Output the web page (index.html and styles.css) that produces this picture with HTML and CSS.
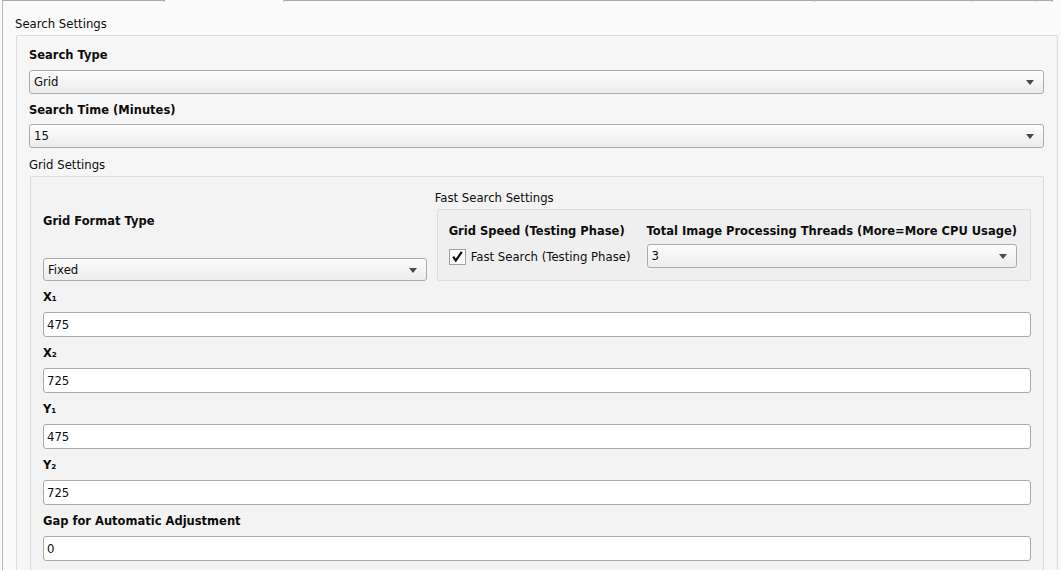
FILE: index.html
```html
<!DOCTYPE html>
<html>
<head>
<meta charset="utf-8">
<link rel="stylesheet" href="styles.css">
</head>
<body>
<div class="tabs">
  <div class="tab t1"></div>
  <div class="tab tactive"></div>
  <div class="tab t3"></div>
  <div class="tab t4"></div>
  <div class="tab t5"></div>
  <div class="tab t6"></div>
</div>
<div class="page">
  <div class="page-title">Search Settings</div>
  <div class="group outer">
    <div class="lbl lbl-first">Search Type</div>
    <div class="combo combo-top"><span>Grid</span><i class="arrow"></i></div>
    <div class="lbl">Search Time (Minutes)</div>
    <div class="combo combo-top"><span>15</span><i class="arrow"></i></div>
    <div class="caption">Grid Settings</div>
    <div class="group inner">
      <div class="grid-row">
        <div class="col-format">
          <div class="lbl-format">Grid Format Type</div>
          <div class="combo combo-fixed"><span>Fixed</span><i class="arrow"></i></div>
        </div>
        <div class="col-fast">
          <div class="fast-caption">Fast Search Settings</div>
          <div class="group fast">
            <div class="fast-col speed">
              <div class="lbl-fast">Grid Speed (Testing Phase)</div>
              <label class="check-row">
                <span class="checkbox"><svg width="13" height="13" viewBox="0 0 13 13"><path d="M2.2 6.6 L4.8 10.6 L10.8 1.8" fill="none" stroke="#111" stroke-width="2.2"/></svg></span>
                <span class="check-text">Fast Search (Testing Phase)</span>
              </label>
            </div>
            <div class="fast-col threads">
              <div class="lbl-fast">Total Image Processing Threads (More=More CPU Usage)</div>
              <div class="combo combo-threads"><span>3</span><i class="arrow"></i></div>
            </div>
          </div>
        </div>
      </div>
      <div class="lbl lbl-field">X₁</div>
      <div class="field">475</div>
      <div class="lbl lbl-field">X₂</div>
      <div class="field">725</div>
      <div class="lbl lbl-field">Y₁</div>
      <div class="field">475</div>
      <div class="lbl lbl-field">Y₂</div>
      <div class="field">725</div>
      <div class="lbl lbl-field">Gap for Automatic Adjustment</div>
      <div class="field">0</div>
      <div class="spacer"></div>
    </div>
    <div class="spacer"></div>
  </div>
</div>
</body>
</html>
```

FILE: styles.css
```css
* { box-sizing: border-box; }
html, body { margin: 0; height: 570px; overflow: hidden; }
body {
  background: #fafafa;
  font-family: "DejaVu Sans", Verdana, sans-serif;
  font-size: 11.7px;
  color: #0d0d0d;
}

/* tab strip remnants */
.tabs { display: flex; height: 2px; }
.tab { height: 2px; border-top: 1px solid #a9a9a9; border-right: 1px solid #b9b9b9; }
.t1 { width: 163px; border-left: 1px solid #b9b9b9; margin-left: 2px; }
.tactive { width: 119px; border-top-color: transparent; }
.t3 { width: 531px; }
.t4 { width: 158px; }
.t5 { width: 63px; }
.t6 { width: 17px; }

.page {
  margin-left: 2px;
  border-left: 1px solid #b9b9b9;
  padding-left: 12px;
  height: 568px;
}
.page-title { padding-top: 14px; line-height: 16px; height: 33px; }

.group { border: 1px solid #dcdcdc; border-radius: 2px; }
.outer {
  margin-left: 1px;
  margin-right: 3px;
  background: #f6f6f6;
  padding: 3px 13px 0 12px;
}

.lbl { font-weight: bold; font-size: 11.5px; line-height: 30px; height: 30px; padding-top: 1px; }
.lbl-first { height: 31px; line-height: 31px; }
.caption { height: 28px; line-height: 24px; padding-top: 5px; }

.combo {
  position: relative;
  height: 24px;
  border: 1px solid #acacac;
  border-radius: 3px;
  background: linear-gradient(#fdfdfd, #ececec);
  padding-left: 4px;
  line-height: 23px;
}
.arrow {
  position: absolute;
  right: 9px;
  top: 9px;
  width: 0; height: 0;
  border-left: 4.5px solid transparent;
  border-right: 4.5px solid transparent;
  border-top: 5px solid #4a4a4a;
}

.inner {
  margin-left: 1px;
  background: #f3f3f3;
  padding: 0 12px 0 12px;
}
.grid-row { display: flex; gap: 10px; }
.col-format { width: 384px; padding-top: 36px; }
.lbl-format { font-weight: bold; font-size: 11.5px; line-height: 16px; height: 45px; }
.combo-fixed { height: 23px; line-height: 22px; }

.col-fast { flex: 1; padding-top: 13px; }
.fast-caption { line-height: 16px; height: 19px; margin-left: -2px; }
.fast {
  background: #efefef;
  display: flex;
  gap: 16px;
  padding: 12px 13px 12px 11px;
  height: 72px;
}
.fast-col { display: flex; flex-direction: column; gap: 6px; }
.threads { flex: 1; }
.lbl-fast { font-weight: bold; font-size: 11.5px; line-height: 16px; height: 16px; padding-top: 1px; white-space: nowrap; }
.check-row { display: flex; align-items: center; gap: 5px; height: 24px; padding-top: 1px; }
.checkbox {
  width: 17px; height: 16px;
  border: 1px solid #a0a0a0;
  background: #fff;
  display: flex; align-items: center; justify-content: center;
}
.check-text { white-space: nowrap; }

.lbl-field { height: 31px; line-height: 31px; padding-top: 1px; }
.inner > .lbl-field:first-of-type { height: 30px; line-height: 30px; }
.field {
  height: 25px;
  border: 1px solid #a9a9a9;
  border-radius: 3px;
  background: #fff;
  padding-left: 3px;
  line-height: 24px;
}
.spacer { height: 40px; }
```
